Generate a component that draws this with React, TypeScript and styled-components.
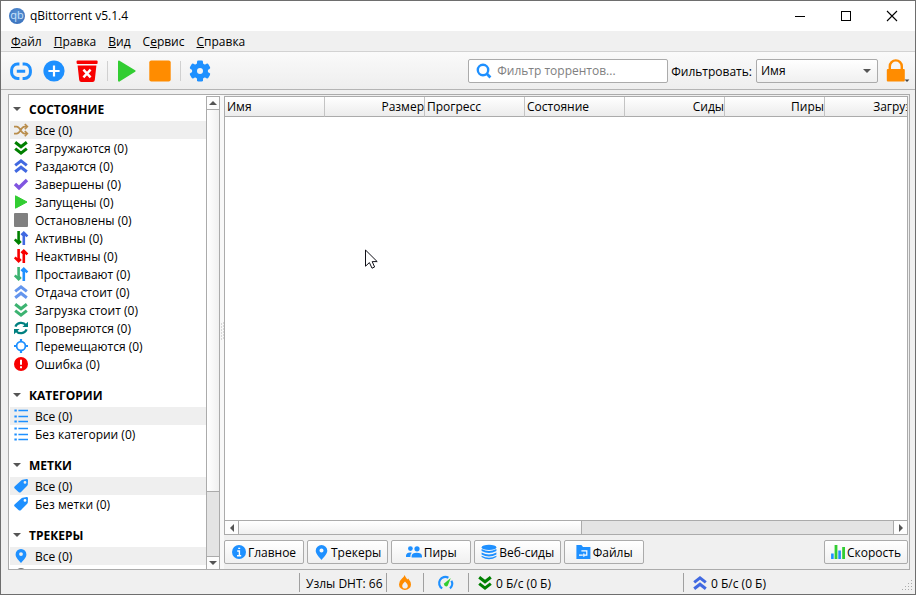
import React from 'react';
import styled, { createGlobalStyle, css } from 'styled-components';

const BLUE = '#1e90ff';
const LINE = '#ababab';
const FONT = "'Open Sans', 'Noto Sans', sans-serif";

const GlobalStyle = createGlobalStyle`
  * { box-sizing: border-box; }
  html, body, #root { height: 100%; }
  body { margin: 0; overflow: hidden; }
  body, button, input, select {
    font-family: ${FONT};
    font-size: 12px;
    line-height: 18px;
    color: #000;
  }
  button { margin: 0; padding: 0; border: 0; background: none; white-space: nowrap; }
  svg { display: block; flex: none; overflow: visible; }
`;

const Window = styled.div`
  display: flex;
  flex-direction: column;
  height: 100%;
  border: 1px solid #6e6e6e;
  background: #f0f0f0;
`;

const TitleBar = styled.header`
  display: flex;
  align-items: center;
  flex: none;
  height: 30px;
  padding-left: 8px;
  background: #fff;
`;

const Logo = styled.span`
  width: 16px;
  height: 16px;
  border-radius: 50%;
  background: radial-gradient(circle at 50% 40%, #5d97d8, #2f66b4);
  color: #c8e1fb;
  font-size: 11px;
  line-height: 14px;
  text-align: center;
`;

const Title = styled.h1`
  flex: 1;
  margin: 0 0 0 5px;
  font-size: 12px;
  font-weight: 400;
`;

const CaptionButton = styled.button`
  display: flex;
  align-items: center;
  justify-content: center;
  width: 46px;
  height: 30px;
`;

const MenuBar = styled.nav`
  display: flex;
  flex: none;
  height: 21px;
  padding: 2px 4px 0;
  border-bottom: 1px solid #d2d2d2;
`;

const MenuItem = styled.button`
  padding: 0 6px;
`;

const ToolBar = styled.div`
  display: flex;
  align-items: center;
  flex: none;
  height: 38px;
  padding: 0 5px 0 9px;
  border-bottom: 1px solid #b4b4b4;
  background: linear-gradient(#fafafa, #eeeeee);
`;

const ToolButton = styled.button`
  display: flex;
  margin-right: 11px;
`;

const ToolSeparator = styled.span`
  width: 1px;
  height: 20px;
  margin: 0 8px 0 -2px;
  background: #d0d0d0;
`;

const fieldBox = css`
  height: 24px;
  border: 1px solid ${LINE};
  border-radius: 2px;
`;

const SearchBox = styled.label`
  ${fieldBox}
  display: flex;
  align-items: center;
  width: 200px;
  margin-left: auto;
  padding-left: 7px;
  background: #fff;
`;

const SearchInput = styled.input`
  flex: 1;
  min-width: 0;
  padding: 1px 5px 0;
  border: 0;
  outline: 0;
  background: transparent;
  &::placeholder { color: #808080; opacity: 1; }
`;

const FilterLabel = styled.label`
  margin: 3px 4px 0 3px;
`;

const SelectBox = styled.span`
  display: grid;
  align-items: center;
  & > * { grid-area: 1 / 1; }
  & > svg { justify-self: end; margin-right: 7px; pointer-events: none; }
`;

const Select = styled.select`
  ${fieldBox}
  width: 122px;
  padding: 1px 4px 0;
  appearance: none;
  background: linear-gradient(#fff, #f0f0f0);
`;

const LockButton = styled.button`
  display: flex;
  align-items: flex-end;
  margin-left: 8px;
`;

const Workspace = styled.main`
  display: flex;
  flex: 1;
  min-height: 0;
  margin: 4px 5px 0 7px;
  border: 1px solid ${LINE};
`;

const SideBar = styled.aside`
  display: flex;
  flex: none;
  width: 211px;
  overflow: hidden;
  background: #fff;
`;

const FilterList = styled.div`
  flex: 1;
  min-width: 0;
  padding: 2px 0 0 1px;
  overflow: hidden;
`;

const Section = styled.section`
  margin-bottom: 10px;
`;

const SectionTitle = styled.button`
  display: flex;
  align-items: center;
  width: 100%;
  height: 24px;
  padding-left: 3px;
  gap: 8px;
  font-weight: 700;
`;

const FilterRow = styled.button<{ $active?: boolean }>`
  display: flex;
  align-items: center;
  gap: 7px;
  width: 100%;
  height: 18px;
  padding-left: 4px;
  background: ${(p) => (p.$active ? '#efefef' : 'transparent')};
`;

const Label = styled.span`
  padding-top: 2px;
`;

const VScroll = styled.div`
  display: flex;
  flex-direction: column;
  flex: none;
  width: 14px;
  margin-top: 1px;
  border: 1px solid ${LINE};
  border-bottom: 0;
  background: #e4e4e4;
`;

const HScroll = styled.div`
  display: flex;
  flex: none;
  height: 14px;
  border-top: 1px solid ${LINE};
  background: #e4e4e4;
`;

const ScrollButton = styled.button<{ $axis: 'x' | 'y'; $end?: boolean }>`
  display: flex;
  align-items: center;
  justify-content: center;
  flex: none;
  width: ${(p) => (p.$axis === 'x' ? '14px' : 'auto')};
  height: ${(p) => (p.$axis === 'y' ? '13px' : 'auto')};
  background: #fdfdfd;
  border: 0 solid ${LINE};
  ${(p) =>
    p.$axis === 'x'
      ? p.$end
        ? 'border-left-width: 1px;'
        : 'border-right-width: 1px;'
      : p.$end
        ? 'border-top-width: 1px;'
        : 'border-bottom-width: 1px;'}
`;

const ScrollTrack = styled.div<{ $axis: 'x' | 'y' }>`
  display: flex;
  flex-direction: ${(p) => (p.$axis === 'x' ? 'row' : 'column')};
  flex: 1;
  min-height: 0;
`;

const ScrollThumb = styled.div<{ $axis: 'x' | 'y' }>`
  border: 0 solid ${LINE};
  ${(p) =>
    p.$axis === 'x'
      ? 'width: calc(100% * 21 / 40); border-right-width: 1px; background: linear-gradient(#fff, #f0f0f0);'
      : 'height: calc(100% * 6 / 7); border-bottom-width: 1px; background: linear-gradient(90deg, #fff, #f0f0f0);'}
`;

const Splitter = styled.div`
  display: flex;
  align-items: center;
  justify-content: center;
  flex: none;
  width: 4px;
  background: #f8f8f8;
`;

const Content = styled.div`
  display: flex;
  flex-direction: column;
  flex: 1;
  min-width: 0;
  padding: 1px 1px 5px 0;
`;

const TransferPane = styled.div`
  display: flex;
  flex-direction: column;
  flex: 1;
  min-height: 0;
  overflow: hidden;
  border: 1px solid ${LINE};
  background: #fff;
`;

const TransferBody = styled.div`
  flex: 1;
  min-height: 0;
`;

const TransferTable = styled.table`
  width: 700px;
  table-layout: fixed;
  border-collapse: separate;
  border-spacing: 0;
`;

const ColumnHead = styled.th<{ $right?: boolean }>`
  height: 20px;
  padding: 1px 0 0 2px;
  border-right: 1px solid #c4c4c4;
  border-bottom: 1px solid ${LINE};
  background: linear-gradient(#fff, #ececec);
  font-weight: 400;
  text-align: ${(p) => (p.$right ? 'right' : 'left')};
`;

const TabBar = styled.div`
  display: flex;
  flex: none;
  gap: 3px;
  margin-top: 5px;
`;

const TabButton = styled.button<{ $last?: boolean }>`
  ${fieldBox}
  display: flex;
  align-items: center;
  justify-content: center;
  gap: 2px;
  min-width: 80px;
  padding: 0 6px;
  margin-left: ${(p) => (p.$last ? 'auto' : '0')};
  background: linear-gradient(#fff, #f0f0f0);
`;

const StatusBar = styled.footer`
  display: flex;
  justify-content: flex-end;
  flex: none;
  height: 24px;
  padding: 3px 0;
`;

const StatusCell = styled.div<{ $width: number; $center?: boolean }>`
  display: flex;
  align-items: center;
  justify-content: ${(p) => (p.$center ? 'center' : 'flex-start')};
  width: ${(p) => p.$width}px;
  height: 19px;
  padding-left: ${(p) => (p.$center ? '0' : '6px')};
  border-left: 1px solid #a0a0a0;
  white-space: nowrap;
`;

const StatusButton = styled.button`
  display: flex;
  align-items: center;
  gap: 4px;
  padding: 0 3px;
`;

const Grip = styled.div`
  display: flex;
  align-items: flex-end;
  align-self: flex-end;
  margin-left: auto;
  padding-right: 1px;
`;

const Pointer = styled.svg`
  position: absolute;
  left: 365px;
  top: 249px;
  pointer-events: none;
`;

type Pic = React.ReactNode;

const Svg = ({ s, w, children }: { s: number; w?: number; children: Pic }) => (
  <svg width={w ?? s} height={s} viewBox={`0 0 ${w ?? s} ${s}`} fill="none" aria-hidden="true">
    {children}
  </svg>
);

const Triangle = ({ dir }: { dir: 'up' | 'down' | 'left' | 'right' }) => {
  const d = {
    up: 'M0 6L4 2L8 6Z',
    down: 'M0 2L4 6L8 2Z',
    left: 'M6 0L2 4L6 8Z',
    right: 'M2 0L6 4L2 8Z',
  }[dir];
  return (
    <Svg s={8}>
      <path d={d} fill="#555" />
    </Svg>
  );
};

const Chevrons = ({ up, color }: { up?: boolean; color: string }) => (
  <Svg s={14}>
    <path
      d={up ? 'M1.2 6.4L7 1.8L12.8 6.4M1.2 12.8L7 8.2L12.8 12.8' : 'M1.2 1.2L7 5.8L12.8 1.2M1.2 7.6L7 12.2L12.8 7.6'}
      stroke={color}
      strokeWidth="3"
    />
  </Svg>
);

const Arrows = ({ down, up }: { down: string; up: string }) => (
  <Svg s={14}>
    <path d="M4.6 0V12M.8 8.4L4.6 12.2L6.8 10" stroke={down} strokeWidth="2.6" />
    <path d="M9.8 14V2M7.4 4.2L9.8 1.8L13.4 5.4" stroke={up} strokeWidth="2.6" />
  </Svg>
);

const PlaySmall = () => (
  <Svg s={14}>
    <path d="M1.5 .8L13 7L1.5 13.2Z" fill="#32cd32" stroke="#32cd32" strokeLinejoin="round" />
  </Svg>
);

const Shuffle = () => (
  <Svg s={14}>
    <path
      d="M0 3.6H2.6C6.6 3.6 6.6 10.6 10.6 10.6H13M0 10.6H2.6C6.6 10.6 6.6 3.6 10.6 3.6H13"
      stroke="#b98d4b"
      strokeWidth="1.8"
    />
    <path d="M10.8 1L13.4 3.6L10.8 6.2M10.8 8L13.4 10.6L10.8 13.2" stroke="#b98d4b" strokeWidth="1.6" />
  </Svg>
);

const Check = () => (
  <Svg s={14}>
    <path d="M1 7L5 10.8L13 3" stroke="#8055e0" strokeWidth="3.4" />
  </Svg>
);

const Square = () => (
  <Svg s={14}>
    <rect width="14" height="14" rx="1" fill="#808080" />
  </Svg>
);

const Refresh = () => (
  <Svg s={14}>
    <path d="M1.4 5.6A6 5.6 0 0 1 12 4.2M12.6 8.4A6 5.6 0 0 1 2 9.8" stroke="#008080" strokeWidth="2.2" />
    <path d="M14 .8V6H8.4ZM0 13.2V8H5.6Z" fill="#008080" />
  </Svg>
);

const Target = () => (
  <Svg s={14}>
    <circle cx="7" cy="7" r="4.4" stroke={BLUE} strokeWidth="1.8" />
    <path d="M7 0V3M7 11V14M0 7H3M11 7H14" stroke={BLUE} strokeWidth="2.2" />
  </Svg>
);

const ErrorIcon = () => (
  <Svg s={14}>
    <circle cx="7" cy="7" r="7" fill="#f80000" />
    <path d="M7 2.8V7.8M7 9.2V11.2" stroke="#fff" strokeWidth="2" />
  </Svg>
);

const ListIcon = () => (
  <Svg s={14}>
    <path d="M4.4 1.5H14M4.4 7.5H14M4.4 12.5H14" stroke={BLUE} strokeWidth="1.4" />
    <path d="M.4 1.5H2.8M.4 7.5H2.8M.4 12.5H2.8" stroke={BLUE} strokeWidth="2" />
  </Svg>
);

const Tag = () => (
  <Svg s={14}>
    <path
      fillRule="evenodd"
      d="M8.6 .8L12.8 0Q14 0 14 1.2L13.8 5.6Q13.8 6.2 13.2 6.8L6.8 13.2Q5.8 14 4.8 13.2L.7 9.6Q-.4 8.6 .6 7.6L7.2 1.6Q7.8 1 8.6 .8ZM11 2A1.4 1.4 0 1 0 11 4.8A1.4 1.4 0 1 0 11 2Z"
      fill={BLUE}
    />
  </Svg>
);

const Pin = ({ size = 14 }: { size?: number }) => (
  <svg width={size} height={size} viewBox="0 0 14 14" aria-hidden="true">
    <path
      fillRule="evenodd"
      d="M7 0A5.4 5.4 0 0 1 12.4 5.4C12.4 8.6 8.6 11.8 7 14C5.4 11.8 1.6 8.6 1.6 5.4A5.4 5.4 0 0 1 7 0ZM7 3.2A1.9 1.9 0 1 0 7 7A1.9 1.9 0 1 0 7 3.2Z"
      fill={BLUE}
    />
  </svg>
);

const Trackerless = () => (
  <Svg s={14}>
    <circle cx="7" cy="7" r="6" fill="#757575" />
  </Svg>
);

const LinkIcon = () => (
  <Svg s={22}>
    <path
      d="M9.4 4H7.6A6 6 0 0 0 1.6 10V12.4A6 6 0 0 0 7.6 18.4H9.4M12.6 4H14.4A6 6 0 0 1 20.4 10V12.4A6 6 0 0 1 14.4 18.4H12.6M6.8 11.2H15.2"
      stroke={BLUE}
      strokeWidth="3"
    />
  </Svg>
);

const AddIcon = () => (
  <Svg s={22}>
    <circle cx="11" cy="11" r="10.6" fill={BLUE} />
    <path d="M11 5.4V16.6M5.4 11H16.6" stroke="#fff" strokeWidth="2.2" />
  </Svg>
);

const TrashIcon = () => (
  <Svg s={22}>
    <rect x=".6" y=".6" width="21" height="3.4" rx="1" fill="#f80000" />
    <path d="M1.6 5.4H20.4L18.8 20Q18.6 22 16.6 22H5.4Q3.4 22 3.2 20Z" fill="#f80000" />
    <path d="M7.4 9.6L14.6 17.4M14.6 9.6L7.4 17.4" stroke="#fff" strokeWidth="2.4" />
  </Svg>
);

const StartIcon = () => (
  <Svg s={22}>
    <path d="M3 1.6L18.6 11L3 20.6Z" fill="#32cd32" stroke="#32cd32" strokeWidth="2" strokeLinejoin="round" />
  </Svg>
);

const StopIcon = () => (
  <Svg s={22}>
    <rect x=".3" y=".6" width="21.4" height="21" rx="2" fill="#ff8c00" />
  </Svg>
);

const GearIcon = () => (
  <Svg s={22}>
    <g fill={BLUE}>
      <circle cx="11" cy="11" r="8" />
      {[0, 60, 120].map((a) => (
        <rect key={a} x="8" y=".4" width="6" height="21.2" rx="1.4" transform={`rotate(${a} 11 11)`} />
      ))}
    </g>
    <circle cx="11" cy="11" r="3" fill="#f4f4f4" />
  </Svg>
);

const SearchIcon = () => (
  <Svg s={16}>
    <circle cx="7" cy="7" r="5.2" stroke={BLUE} strokeWidth="2.4" />
    <path d="M10.6 10.6L14.4 14.4" stroke={BLUE} strokeWidth="2.8" />
  </Svg>
);

const LockIcon = () => (
  <Svg s={24} w={24}>
    <path d="M3.8 12V7.4A6 6 0 0 1 15.8 7.4V12" stroke="#ff8c00" strokeWidth="2.4" />
    <rect x=".8" y="10" width="18" height="12.6" rx="1" fill="#ff8c00" />
    <path d="M18.6 20.6H23.4L21 23Z" fill="#444" />
  </Svg>
);

const InfoIcon = () => (
  <Svg s={14}>
    <circle cx="7" cy="7" r="7" fill={BLUE} />
    <path d="M5.2 6H7.4V10.6M5 10.8H9.2M6.2 3.4H8.2" stroke="#fff" strokeWidth="1.4" />
  </Svg>
);

const PeersIcon = () => (
  <Svg s={14} w={16}>
    <g fill={BLUE}>
      <circle cx="4.4" cy="3.6" r="2.4" />
      <circle cx="11" cy="3.8" r="2.6" />
      <path d="M0 12V10.4Q.4 7.4 4.2 7.4Q5.4 7.4 5.8 7.8Q4.4 9 4.4 11V12ZM5.6 12.6V11Q6 7.8 10.8 7.8Q15.6 7.8 16 11V12.6Z" />
    </g>
  </Svg>
);

const DatabaseIcon = () => (
  <Svg s={16}>
    <g fill={BLUE}>
      <ellipse cx="8" cy="3.4" rx="7.4" ry="2.6" />
      <path d="M.6 5Q8 9 15.4 5V7Q8 11 .6 7ZM.6 8.4Q8 12.4 15.4 8.4V10.4Q8 14.4 .6 10.4ZM.6 11.8Q8 15.8 15.4 11.8V13Q8 17.4 .6 13Z" />
    </g>
  </Svg>
);

const FolderIcon = () => (
  <Svg s={14} w={15}>
    <path d="M.4 0H5.4L7 2H14.4V14H.4Z" fill={BLUE} />
    <path d="M5.4 5.8H10.8V10.2H8.4M3 10.2H6.8M7.8 8.6V11.8" stroke="#fff" strokeWidth="1.2" />
  </Svg>
);

const SpeedIcon = () => (
  <Svg s={14}>
    <path d="M1.4 8.6V14M8.6 5.6V14" stroke={BLUE} strokeWidth="2.6" />
    <path d="M5 0V14M12.6 2V14" stroke="#32cd32" strokeWidth="2.8" />
  </Svg>
);

const FireIcon = () => (
  <Svg s={15} w={12}>
    <path
      fillRule="evenodd"
      d="M5.6 0Q6.2 2 8.4 4.4L9.2 3.4Q12 6.6 12 9.4A6 5.6 0 0 1 0 9.4Q0 6 3 3.6Q5.2 1.8 5.6 0ZM6 6.6Q3.2 9.2 3.2 10.8A2.8 2.8 0 0 0 8.8 10.8Q8.8 9.2 6 6.6Z"
      fill="#ff8c00"
    />
  </Svg>
);

const GaugeIcon = () => (
  <Svg s={14}>
    <path d="M3.2 12.4A6 6 0 0 1 9.4 1.8M12.4 4.8A6 6 0 0 1 11 12.4" stroke={BLUE} strokeWidth="2.2" />
    <path d="M11.8 2L8.8 9.4A1.9 1.9 0 1 1 5.4 7.2Z" fill="#32cd32" />
  </Svg>
);

const GripDots = () => (
  <Svg s={12}>
    {[
      [9, 0],
      [6, 3],
      [9, 3],
      [3, 6],
      [6, 6],
      [9, 6],
      [0, 9],
      [3, 9],
      [6, 9],
      [9, 9],
    ].map(([x, y]) => (
      <rect key={`${x}-${y}`} x={x} y={y} width="1" height="1" fill="#aaa" />
    ))}
  </Svg>
);

const SplitDots = () => (
  <Svg s={18} w={3}>
    {[0, 3, 6, 9, 12, 15].map((y) => (
      <path key={y} d={`M0 ${y + 1}H1M2 ${y}H3`} stroke="#b4b4b4" />
    ))}
  </Svg>
);

const menus: [string, string, string][] = [
  ['', 'Ф', 'айл'],
  ['', 'П', 'равка'],
  ['', 'В', 'ид'],
  ['С', 'е', 'рвис'],
  ['', 'С', 'правка'],
];

const sections: { title: string; rows: [Pic, string][] }[] = [
  {
    title: 'СОСТОЯНИЕ',
    rows: [
      [<Shuffle />, 'Все (0)'],
      [<Chevrons color="#008000" />, 'Загружаются (0)'],
      [<Chevrons up color="#4169e1" />, 'Раздаются (0)'],
      [<Check />, 'Завершены (0)'],
      [<PlaySmall />, 'Запущены (0)'],
      [<Square />, 'Остановлены (0)'],
      [<Arrows down="#008000" up="#4169e1" />, 'Активны (0)'],
      [<Arrows down="#f80000" up="#f80000" />, 'Неактивны (0)'],
      [<Arrows down="#3cb371" up={BLUE} />, 'Простаивают (0)'],
      [<Chevrons up color="#6495ed" />, 'Отдача стоит (0)'],
      [<Chevrons color="#3cb371" />, 'Загрузка стоит (0)'],
      [<Refresh />, 'Проверяются (0)'],
      [<Target />, 'Перемещаются (0)'],
      [<ErrorIcon />, 'Ошибка (0)'],
    ],
  },
  { title: 'КАТЕГОРИИ', rows: [[<ListIcon />, 'Все (0)'], [<ListIcon />, 'Без категории (0)']] },
  { title: 'МЕТКИ', rows: [[<Tag />, 'Все (0)'], [<Tag />, 'Без метки (0)']] },
  { title: 'ТРЕКЕРЫ', rows: [[<Pin />, 'Все (0)'], [<Trackerless />, '']] },
];

const columns: [string, boolean][] = [
  ['Имя', false],
  ['Размер', true],
  ['Прогресс', false],
  ['Состояние', false],
  ['Сиды', true],
  ['Пиры', true],
  ['Загрузка', true],
];

const tabs: [Pic, string][] = [
  [<InfoIcon />, 'Главное'],
  [<Pin size={15} />, 'Трекеры'],
  [<PeersIcon />, 'Пиры'],
  [<DatabaseIcon />, 'Веб-сиды'],
  [<FolderIcon />, 'Файлы'],
];

export default function App() {
  return (
    <Window>
      <GlobalStyle />
      <TitleBar>
        <Logo aria-hidden="true">qb</Logo>
        <Title>qBittorrent v5.1.4</Title>
        <CaptionButton aria-label="Свернуть">
          <Svg s={10}>
            <path d="M0 5.5H10" stroke="#000" />
          </Svg>
        </CaptionButton>
        <CaptionButton aria-label="Развернуть">
          <Svg s={10}>
            <rect x=".5" y=".5" width="9" height="9" stroke="#000" />
          </Svg>
        </CaptionButton>
        <CaptionButton aria-label="Закрыть">
          <Svg s={10}>
            <path d="M0 0L10 10M10 0L0 10" stroke="#000" strokeWidth="1.1" />
          </Svg>
        </CaptionButton>
      </TitleBar>

      <MenuBar>
        {menus.map(([before, key, after]) => (
          <MenuItem key={before + key + after}>
            {before}
            <u>{key}</u>
            {after}
          </MenuItem>
        ))}
      </MenuBar>

      <ToolBar>
        <ToolButton aria-label="Добавить ссылку"><LinkIcon /></ToolButton>
        <ToolButton aria-label="Добавить торрент"><AddIcon /></ToolButton>
        <ToolButton aria-label="Удалить"><TrashIcon /></ToolButton>
        <ToolSeparator />
        <ToolButton aria-label="Запустить"><StartIcon /></ToolButton>
        <ToolButton aria-label="Остановить"><StopIcon /></ToolButton>
        <ToolSeparator />
        <ToolButton aria-label="Настройки"><GearIcon /></ToolButton>
        <SearchBox>
          <SearchIcon />
          <SearchInput type="text" placeholder="Фильтр торрентов..." aria-label="Фильтр торрентов" />
        </SearchBox>
        <FilterLabel htmlFor="filter-by">Фильтровать:</FilterLabel>
        <SelectBox>
          <Select id="filter-by" defaultValue="name">
            <option value="name">Имя</option>
          </Select>
          <Triangle dir="down" />
        </SelectBox>
        <LockButton aria-label="Заблокировать"><LockIcon /></LockButton>
      </ToolBar>

      <Workspace>
        <SideBar>
          <FilterList>
            {sections.map((s) => (
              <Section key={s.title}>
                <SectionTitle>
                  <Triangle dir="down" />
                  <Label>{s.title}</Label>
                </SectionTitle>
                {s.rows.map(([icon, label], i) => (
                  <FilterRow key={i} $active={i === 0}>
                    {icon}
                    <Label>{label}</Label>
                  </FilterRow>
                ))}
              </Section>
            ))}
          </FilterList>
          <VScroll>
            <ScrollButton $axis="y" aria-label="Вверх"><Triangle dir="up" /></ScrollButton>
            <ScrollTrack $axis="y"><ScrollThumb $axis="y" /></ScrollTrack>
            <ScrollButton $axis="y" $end aria-label="Вниз"><Triangle dir="down" /></ScrollButton>
          </VScroll>
        </SideBar>
        <Splitter><SplitDots /></Splitter>
        <Content>
          <TransferPane>
            <TransferBody>
              <TransferTable>
                <thead>
                  <tr>
                    {columns.map(([name, right]) => (
                      <ColumnHead key={name} $right={right} scope="col">{name}</ColumnHead>
                    ))}
                  </tr>
                </thead>
              </TransferTable>
            </TransferBody>
            <HScroll>
              <ScrollButton $axis="x" aria-label="Влево"><Triangle dir="left" /></ScrollButton>
              <ScrollTrack $axis="x"><ScrollThumb $axis="x" /></ScrollTrack>
              <ScrollButton $axis="x" $end aria-label="Вправо"><Triangle dir="right" /></ScrollButton>
            </HScroll>
          </TransferPane>
          <TabBar>
            {tabs.map(([icon, label]) => (
              <TabButton key={label}>
                {icon}
                <Label>{label}</Label>
              </TabButton>
            ))}
            <TabButton $last>
              <SpeedIcon />
              <Label>Скорость</Label>
            </TabButton>
          </TabBar>
        </Content>
      </Workspace>

      <StatusBar>
        <StatusCell $width={87}><Label>Узлы DHT: 66</Label></StatusCell>
        <StatusCell $width={37} $center>
          <StatusButton aria-label="Состояние подключения"><FireIcon /></StatusButton>
        </StatusCell>
        <StatusCell $width={45} $center>
          <StatusButton aria-label="Ограничения скорости"><GaugeIcon /></StatusButton>
        </StatusCell>
        <StatusCell $width={215}>
          <StatusButton><Chevrons color="#008000" /><Label>0 Б/с (0 Б)</Label></StatusButton>
        </StatusCell>
        <StatusCell $width={232}>
          <StatusButton><Chevrons up color="#4169e1" /><Label>0 Б/с (0 Б)</Label></StatusButton>
          <Grip><GripDots /></Grip>
        </StatusCell>
      </StatusBar>

      <Pointer width="13" height="20" viewBox="0 0 13 20" aria-hidden="true">
        <path
          d="M.5 1V17.2L4.4 13.6L7 19.2L9.6 18L7.2 12.6H12.2Z"
          fill="#fff"
          stroke="#101018"
        />
      </Pointer>
    </Window>
  );
}
